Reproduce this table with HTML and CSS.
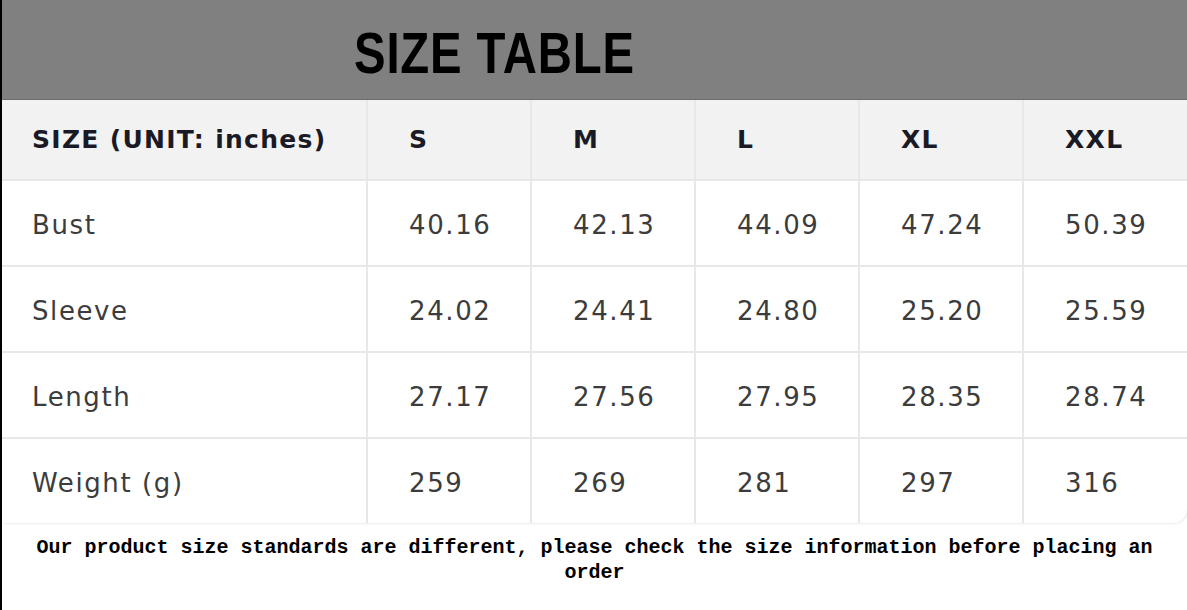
FILE: index.html
```html
<!DOCTYPE html>
<html>
<head>
<meta charset="utf-8">
<link rel="stylesheet" href="styles.css">
</head>
<body>
<div class="page">
  <header class="banner"><h1 class="banner-title">SIZE TABLE</h1></header>
  <table class="sizes">
    <colgroup>
      <col class="c-label"><col class="c-val"><col class="c-val"><col class="c-val"><col class="c-val"><col class="c-last">
    </colgroup>
    <thead>
      <tr><th>SIZE (UNIT: inches)</th><th>S</th><th>M</th><th>L</th><th>XL</th><th>XXL</th></tr>
    </thead>
    <tbody>
      <tr><td>Bust</td><td>40.16</td><td>42.13</td><td>44.09</td><td>47.24</td><td>50.39</td></tr>
      <tr><td>Sleeve</td><td>24.02</td><td>24.41</td><td>24.80</td><td>25.20</td><td>25.59</td></tr>
      <tr><td>Length</td><td>27.17</td><td>27.56</td><td>27.95</td><td>28.35</td><td>28.74</td></tr>
      <tr><td>Weight (g)</td><td>259</td><td>269</td><td>281</td><td>297</td><td>316</td></tr>
    </tbody>
  </table>
  <p class="note">Our product size standards are different, please check the size information before placing an order</p>
</div>
</body>
</html>
```
FILE: styles.css
```css
html, body { margin: 0; padding: 0; background: #fff; }
.page {
  width: 1185px;
  height: 610px;
  border-left: 2px solid #000;
  overflow: hidden;
}
.banner {
  height: 100px;
  background: #808080;
  border-bottom: 1px solid #6e6e6e;
  box-sizing: border-box;
  display: flex;
  align-items: center;
  padding-left: 352px;
}
.banner-title {
  margin: 0;
  font-family: "Liberation Sans", sans-serif;
  font-weight: bold;
  font-size: 57px;
  letter-spacing: 1px;
  color: #000;
  line-height: 1;
  padding-top: 8px;
  transform: scaleX(0.83);
  transform-origin: left center;
}
.sizes {
  width: 1185px;
  border-collapse: separate;
  border-spacing: 0;
  table-layout: fixed;
  font-family: "DejaVu Sans", sans-serif;
  border-bottom-right-radius: 14px;
  box-shadow: 1px 1px 2px rgba(0,0,0,0.08);
  overflow: hidden;
}
.c-label { width: 366px; }
.c-val { width: 164px; }
.c-last { width: 163px; }
.sizes th, .sizes td {
  text-align: left;
  padding: 0 0 0 41px;
  border-right: 2px solid #e8e8e8;
  border-bottom: 2px solid #e8e8e8;
}
.sizes th:last-child, .sizes td:last-child { border-right: 0; }
.sizes tbody tr:last-child td { border-bottom: 0; }
.sizes th:first-child, .sizes td:first-child { padding-left: 30px; }
.sizes th {
  height: 79px;
  background: #f2f2f2;
  color: #1a1a26;
  font-size: 25px;
  letter-spacing: 1.3px;
  font-weight: bold;
}
.sizes td {
  height: 80px;
  color: #3c3c3c;
  font-size: 26px;
  letter-spacing: 1.6px;
  padding-top: 4px;
}
.note {
  margin: 12px 0 0;
  text-align: center;
  font-family: "Liberation Mono", monospace;
  font-weight: bold;
  font-size: 20px;
  letter-spacing: 0;
  line-height: 25px;
  color: #000;
}
```
